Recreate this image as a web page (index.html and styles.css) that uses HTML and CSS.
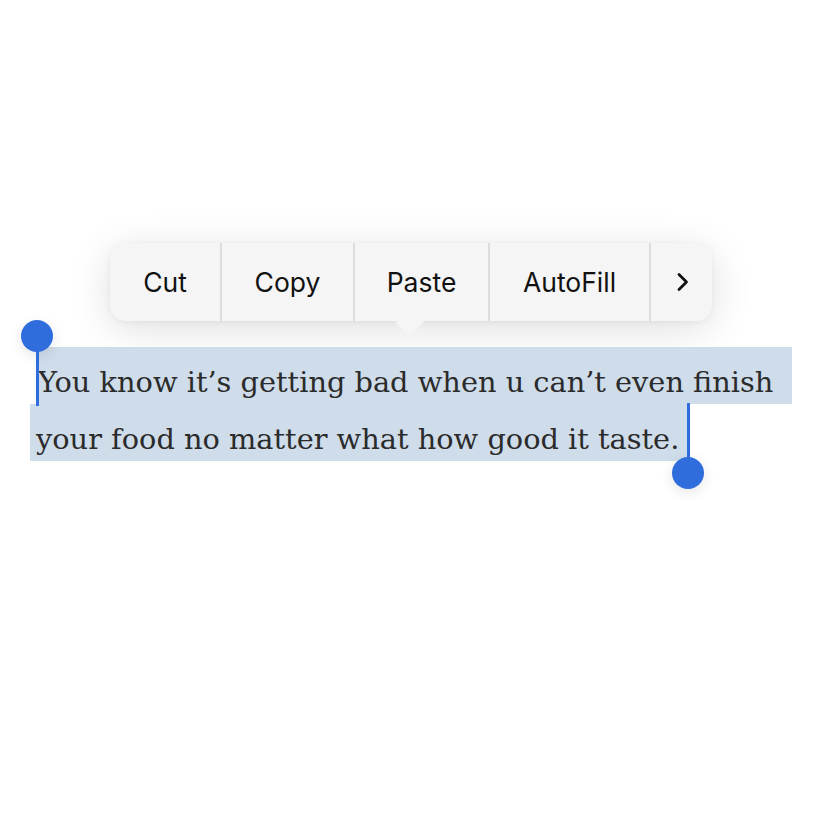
FILE: index.html
```html
<!DOCTYPE html>
<html>
<head>
<meta charset="utf-8">
<link rel="stylesheet" href="styles.css">
</head>
<body>
<div class="stage">
  <div class="menu">
    <div class="item cut">Cut</div>
    <div class="item copy">Copy</div>
    <div class="item paste">Paste</div>
    <div class="item autofill">AutoFill</div>
    <div class="item more">
      <svg width="14" height="20" viewBox="0 0 14 20"><path d="M3 2.5 L10.5 10 L3 17.5" fill="none" stroke="#111" stroke-width="2.8" stroke-linecap="round" stroke-linejoin="round"/></svg>
    </div>
    <div class="pointer"></div>
  </div>
  <div class="text">
    <div class="line line1"><span>You know it’s getting bad when u can’t even finish</span></div>
    <div class="line line2"><span>your food no matter what how good it taste.</span></div>
    <div class="handle start"><div class="knob"></div><div class="bar"></div></div>
    <div class="handle end"><div class="bar"></div><div class="knob"></div></div>
  </div>
</div>
</body>
</html>
```
FILE: styles.css
```css
html, body {
  margin: 0;
  padding: 0;
  background: #ffffff;
}
.stage {
  width: 828px;
  height: 828px;
  padding-top: 243px;
  box-sizing: border-box;
}
.menu {
  position: relative;
  margin-left: 110px;
  width: 602px;
  height: 78px;
  display: flex;
  background: #f5f5f5;
  border-radius: 15px;
  box-shadow: 0 8px 40px rgba(0,0,0,0.13), 0 1px 6px rgba(0,0,0,0.05);
  font-family: "Inter", "Liberation Sans", sans-serif;
  font-size: 26.5px;
  color: #111;
}
.item {
  display: flex;
  align-items: center;
  justify-content: center;
  border-right: 2px solid #dcdcdc;
  padding-bottom: 1px;
}
.cut { width: 110px; }
.copy { width: 131px; }
.paste { width: 133px; }
.autofill { width: 159px; }
.more { flex: 1; border-right: none; padding-left: 2px; }
.pointer {
  position: absolute;
  left: 289px;
  top: 68px;
  width: 22px;
  height: 22px;
  background: #f5f5f5;
  transform: rotate(45deg) scaleX(0.9);
  border-radius: 3px;
}
.text {
  position: relative;
  margin-top: 26px;
  font-family: "DejaVu Serif", serif;
  font-size: 28.8px;
  color: #2b2b2b;
}
.line {
  height: 57px;
  display: flex;
  align-items: center;
  background: #cfdcea;
  white-space: nowrap;
}
.line1 {
  margin-left: 36px;
  width: 756px;
  padding-left: 2px;
  box-sizing: border-box;
}
.line2 {
  margin-left: 30px;
  width: 658px;
  padding-left: 6px;
  box-sizing: border-box;
}
.line span { display: block; padding-top: 12px; }
.handle {
  position: absolute;
  display: flex;
  flex-direction: column;
  align-items: center;
  width: 32px;
}
.knob {
  width: 32px;
  height: 32px;
  border-radius: 50%;
  background: #2f6ddd;
  box-shadow: 0 4px 14px rgba(0,0,0,0.10);
}
.bar {
  width: 3px;
  background: #2f6ddd;
}
.handle.start { left: 21px; top: -27px; }
.handle.start .bar { height: 58px; margin-top: -4px; }
.handle.end { left: 672px; top: 56px; }
.handle.end .bar { height: 58px; margin-bottom: -4px; }
```
